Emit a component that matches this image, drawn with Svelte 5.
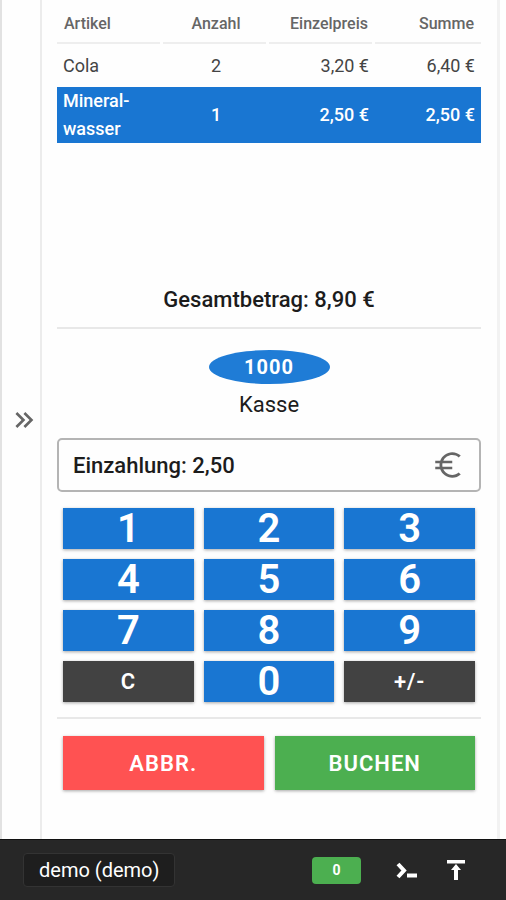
<script lang="ts">
	type Item = { name: string; count: number; price: number };

	const items: Item[] = [
		{ name: 'Cola', count: 2, price: 3.2 },
		{ name: 'Mineral-\nwasser', count: 1, price: 2.5 }
	];
	const keys = ['1', '2', '3', '4', '5', '6', '7', '8', '9', 'C', '0', '+/-'];

	let selected = 1;
	let deposit = '2,50';

	$: total = items.reduce((sum, item) => sum + item.count * item.price, 0);

	function format(value: number) {
		return value.toFixed(2).replace('.', ',') + ' €';
	}

	function isDigit(key: string) {
		return key >= '0' && key <= '9';
	}

	function press(key: string) {
		if (key === 'C') {
			deposit = '0,00';
			return;
		}
		if (key === '+/-') {
			deposit = deposit.startsWith('-') ? deposit.slice(1) : '-' + deposit;
			return;
		}
		const sign = deposit.startsWith('-') ? '-' : '';
		const cents = Number(deposit.replace(/\D/g, '') + key);
		deposit = sign + (cents / 100).toFixed(2).replace('.', ',');
	}
</script>

<div class="app">
	<main>
		<aside>
			<button type="button" class="expand" aria-label="Menü öffnen">
				<svg width="32" height="32" viewBox="0 0 24 24" fill="currentColor">
					<path
						d="M5.59,7.41L7,6L13,12L7,18L5.59,16.59L10.17,12L5.59,7.41M11.59,7.41L13,6L19,12L13,18L11.59,16.59L16.17,12L11.59,7.41Z"
					/>
				</svg>
			</button>
		</aside>

		<section class="card">
			<div class="list">
				<table>
					<thead>
						<tr>
							<th>Artikel</th>
							<th>Anzahl</th>
							<th>Einzelpreis</th>
							<th>Summe</th>
						</tr>
					</thead>
					<tbody>
						{#each items as item, i}
							<tr class:selected={i === selected} on:click={() => (selected = i)}>
								<td>{item.name}</td>
								<td>{item.count}</td>
								<td>{format(item.price)}</td>
								<td>{format(item.count * item.price)}</td>
							</tr>
						{/each}
					</tbody>
				</table>
			</div>

			<div class="total">Gesamtbetrag: {format(total)}</div>
			<hr />

			<div class="account">
				<span class="number">1000</span>
				<span class="name">Kasse</span>
			</div>

			<div class="field">
				<input type="text" aria-label="Einzahlung" value="Einzahlung: {deposit}" readonly />
				<svg width="34" height="34" viewBox="0 0 24 24" fill="currentColor">
					<path
						d="M15 19c-2.8 0-5.2-1.6-6.300-4H15v-1.700H8.100A7 7 0 0 1 8.100 10.700H15V9H8.700C9.800 6.600 12.200 5 15 5c1.700 0 3.300.6 4.500 1.700L21 5.300C19.400 3.900 17.300 3 15 3c-3.900 0-7.200 2.500-8.500 6H3v1.700h3.100a9 9 0 0 0 0 2.600H3V15h3.500c1.300 3.500 4.600 6 8.500 6 2.300 0 4.400-.9 6-2.300l-1.500-1.400C18.300 18.400 16.700 19 15 19z"
					/>
				</svg>
			</div>

			<div class="keypad">
				{#each keys as key}
					<button type="button" class:dark={!isDigit(key)} on:click={() => press(key)}>{key}</button>
				{/each}
			</div>
			<hr />

			<div class="actions">
				<button type="button" class="cancel">ABBR.</button>
				<button type="button" class="book">BUCHEN</button>
			</div>
		</section>
	</main>

	<footer>
		<button type="button" class="user">demo (demo)</button>
		<div class="tools">
			<span class="badge">0</span>
			<button type="button" class="icon" aria-label="Konsole">
				<svg width="24" height="24" viewBox="0 0 24 24" fill="none" stroke="currentColor">
					<path d="M3 6l6 6.500-6 6.500" stroke-width="4" />
					<path d="M12 17.500h10" stroke-width="4" />
				</svg>
			</button>
			<button type="button" class="icon" aria-label="Nach oben">
				<svg width="24" height="24" viewBox="0 0 24 24" fill="currentColor">
					<path d="M3 2h18v3.500H3zM12 6l5 6h-3v10h-4V12H7z" />
				</svg>
			</button>
		</div>
	</footer>
</div>

<style>
	:global(body) {
		background: #fefefe;
	}

	.app {
		display: flex;
		flex-direction: column;
		min-height: 100vh;
		font-family: Roboto, 'Liberation Sans', sans-serif;
		color: #1c1c1c;
	}

	button {
		padding: 0;
		border: none;
		font-family: inherit;
		font-weight: 600;
		color: #fff;
		cursor: pointer;
	}

	svg {
		display: block;
	}

	main {
		flex: 1;
		display: flex;
		padding-right: 6px;
	}

	aside {
		display: flex;
		align-items: center;
		justify-content: flex-end;
		width: 38px;
		border-left: 2px solid #e2e2e2;
	}

	.expand {
		background: none;
		color: #666;
	}

	.card {
		flex: 1;
		box-sizing: border-box;
		padding: 5px 16px 0 15px;
		border-left: 2px solid #ececec;
		border-right: 3px solid #f2f2f2;
	}

	.list {
		height: 275px;
	}

	table {
		width: 100%;
		table-layout: fixed;
		border-spacing: 0;
		font-size: 18px;
	}

	/* the line under each heading stops short of the next column */
	th {
		height: 36px;
		padding: 0 7px 3px;
		background: linear-gradient(#eee, #eee) no-repeat left bottom / calc(100% - 3px) 2px;
		font-size: 16px;
		font-weight: 500;
		text-align: right;
		color: #666;
	}

	th:last-child {
		background-size: 100% 2px;
	}

	td {
		height: 43px;
		padding: 0 6px;
		line-height: 28px;
		text-align: right;
		white-space: pre-line;
		color: #444;
	}

	th:first-child,
	td:first-child {
		text-align: left;
	}

	th:nth-child(2),
	td:nth-child(2) {
		text-align: center;
	}

	.selected {
		background: #1976d2;
	}

	.selected td {
		font-weight: 500;
		color: #fff;
	}

	.total {
		font-size: 22px;
		font-weight: 500;
		line-height: 40px;
		text-align: center;
	}

	hr {
		height: 2px;
		margin: 7px 0 0;
		border: none;
		background: #e8e8e8;
	}

	.account {
		display: flex;
		flex-direction: column;
		align-items: center;
		padding: 21px 0 15px;
		font-size: 20px;
	}

	.number {
		width: 121px;
		border-radius: 50%;
		background: #1f7cd6;
		font-weight: 700;
		line-height: 34px;
		letter-spacing: 1px;
		text-align: center;
		color: #fff;
	}

	.name {
		margin-top: 3px;
		font-size: 22px;
		line-height: 36px;
	}

	.field {
		display: flex;
		align-items: center;
		padding: 0 14px;
		margin-bottom: 16px;
		border: 2px solid #b4b4b4;
		border-radius: 5px;
		color: #666;
	}

	input {
		flex: 1;
		min-width: 0;
		height: 50px;
		padding: 0;
		border: none;
		outline: none;
		background: none;
		font-family: inherit;
		font-size: 22px;
		font-weight: 500;
		color: #1c1c1c;
	}

	.keypad {
		display: grid;
		grid-template-columns: repeat(3, 1fr);
		gap: 10px;
		padding: 0 6px 8px;
	}

	.keypad button,
	.actions button {
		box-shadow: 0 1px 3px rgba(0, 0, 0, 0.35);
	}

	.keypad button {
		height: 41px;
		background: #1976d2;
		font-size: 40px;
		line-height: 40px;
	}

	.keypad .dark {
		background: #424242;
		font-size: 22px;
		letter-spacing: 1px;
	}

	.actions {
		display: grid;
		grid-template-columns: 1fr 1fr;
		gap: 11px;
		padding: 17px 6px;
	}

	.actions button {
		height: 54px;
		font-size: 22px;
		letter-spacing: 1px;
	}

	.cancel {
		background: #ff5252;
	}

	.book {
		background: #4caf50;
	}

	footer {
		display: flex;
		align-items: center;
		justify-content: space-between;
		height: 60px;
		padding: 0 38px 0 23px;
		border-top: 1px solid #111;
		background: #272727;
	}

	.user {
		height: 34px;
		padding: 0 15px;
		border: 1px solid #333;
		border-radius: 4px;
		background: #1e1e1e;
		font-size: 20px;
		font-weight: 400;
	}

	.tools {
		display: flex;
		align-items: center;
		gap: 25px;
	}

	.badge {
		width: 49px;
		margin-right: 9px;
		border-radius: 4px;
		background: #4caf50;
		font-size: 14px;
		font-weight: 700;
		line-height: 27px;
		text-align: center;
		color: #fff;
	}

	.icon {
		background: none;
	}
</style>
